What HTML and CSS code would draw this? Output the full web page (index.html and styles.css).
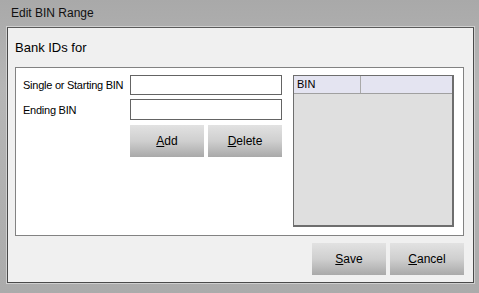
FILE: index.html
```html
<!DOCTYPE html>
<html lang="en">
<head>
  <meta charset="UTF-8">
  <title>Edit BIN Range</title>
  <link rel="stylesheet" href="styles.css">
</head>
<body>
  <div class="window">
    <div class="titlebar">Edit BIN Range</div>
    <div class="client">
      <div class="heading">Bank IDs for</div>
      <div class="group">
        <div class="form">
          <div class="form-row">
            <label for="startBin">Single or Starting BIN</label>
            <input type="text" id="startBin">
          </div>
          <div class="form-row">
            <label for="endBin">Ending BIN</label>
            <input type="text" id="endBin">
          </div>
          <div class="form-row buttons">
            <button><u>A</u>dd</button>
            <button><u>D</u>elete</button>
          </div>
        </div>
        <div class="list">
          <div class="list-head">
            <span class="col">BIN</span>
            <span class="col"></span>
          </div>
        </div>
      </div>
      <div class="footer">
        <button><u>S</u>ave</button>
        <button><u>C</u>ancel</button>
      </div>
    </div>
  </div>
</body>
</html>
```

FILE: styles.css
```css
html, body {
  margin: 0;
  padding: 0;
  height: 100%;
  overflow: hidden;
}
body {
  font-family: 'Liberation Sans', Arial, sans-serif;
  font-size: 11px;
  color: #000;
  background-color: #9c9c9c;
}
.window {
  width: 479px;
  height: 293px;
  box-sizing: border-box;
  padding: 0 5px 10px 7px;
  background: linear-gradient(to bottom, #a9a9a9 0%, #b6b6b6 30%, #ababab 100%);
  display: flex;
  flex-direction: column;
}
.titlebar {
  height: 27px;
  line-height: 26px;
  padding-left: 4px;
  font-size: 12px;
  color: #111;
}
.client {
  flex: 1;
  background-color: #f0f0f0;
  border: 1px solid #4a4a4a;
  border-top-color: #5a5a5a;
  box-shadow: 0 0 0 1px #cfcfcf;
  padding: 0 9px 7px 7px;
  display: flex;
  flex-direction: column;
}
.heading {
  font-size: 13px;
  height: 38px;
  line-height: 38px;
  padding-top: 1px;
}
.group {
  display: flex;
  background-color: #fff;
  border: 1px solid #828282;
  padding: 7px 8px 0 7px;
  box-sizing: border-box;
  height: 169px;
}
.form {
  width: 259px;
}
.form-row {
  display: flex;
  align-items: center;
  margin-bottom: 4px;
}
label {
  width: 107px;
  letter-spacing: -0.25px;
}
input[type="text"] {
  width: 152px;
  height: 20px;
  box-sizing: border-box;
  border: 1px solid #646464;
  padding: 0;
  margin: 0;
}
.form-row + .form-row input[type="text"] {
  height: 21px;
}
.buttons {
  padding-left: 107px;
  gap: 4px;
  margin-top: 5px;
}
button {
  width: 74px;
  height: 32px;
  border: none;
  padding: 0;
  font-family: 'Liberation Sans', Arial, sans-serif;
  font-size: 12px;
  color: #000;
  background: linear-gradient(to bottom, #e2e2e2 0%, #cfcfcf 50%, #a9a9a9 100%);
}
.list {
  margin-left: 11px;
  width: 161px;
  height: 152px;
  box-sizing: border-box;
  border: 2px solid #6e6e6e;
  border-width: 1px 2px 2px 1px;
  background-color: #dfdfdf;
}
.list-head {
  display: flex;
  height: 17px;
  background-color: #e4e4f1;
  border-bottom: 1px solid #a0a0a0;
}
.col {
  line-height: 17px;
  padding-left: 3px;
  font-size: 11px;
}
.col:first-child {
  width: 63px;
  border-right: 1px solid #a9a9a9;
}
.footer {
  margin-top: auto;
  display: flex;
  justify-content: flex-end;
  gap: 4px;
}
```
